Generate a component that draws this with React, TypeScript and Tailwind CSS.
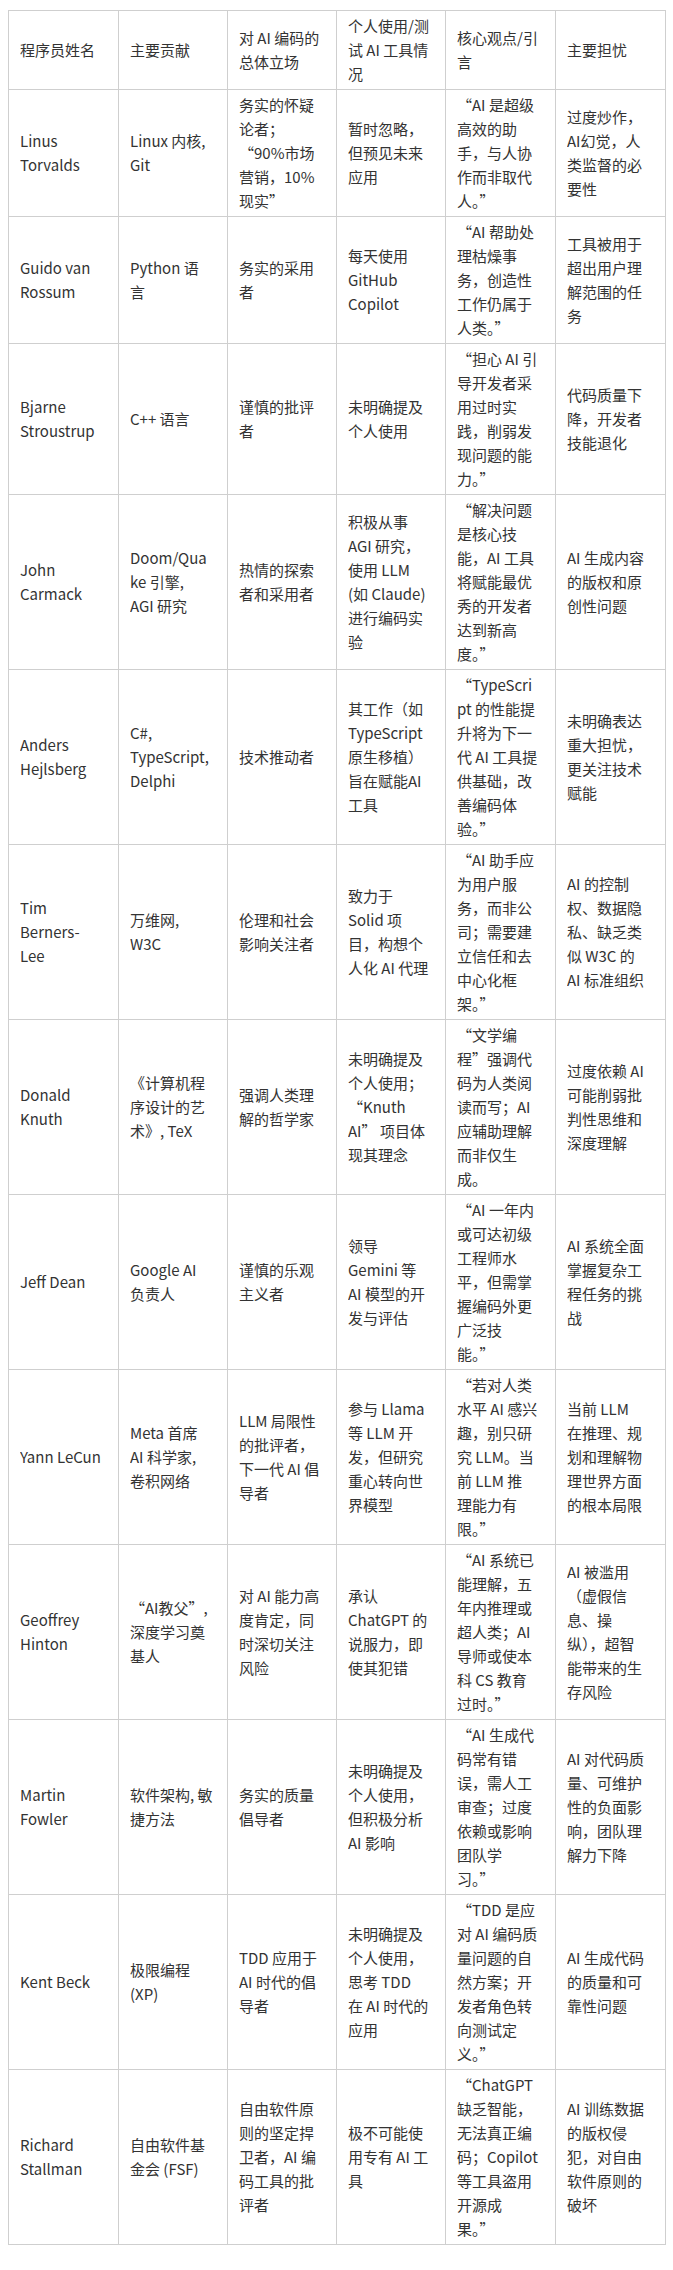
import React from "react";

type Row = string[][];

const header: Row = [
  ["程序员姓名"],
  ["主要贡献"],
  ["对 AI 编码的", "总体立场"],
  ["个人使用/测", "试 AI 工具情", "况"],
  ["核心观点/引", "言"],
  ["主要担忧"],
];

const rows: Row[] = [
  [
    ["Linus", "Torvalds"],
    ["Linux 内核,", "Git"],
    ["务实的怀疑", "论者；", "“90%市场", "营销，10%", "现实”"],
    ["暂时忽略，", "但预见未来", "应用"],
    ["“AI 是超级", "高效的助", "手，与人协", "作而非取代", "人。”"],
    ["过度炒作，", "AI幻觉，人", "类监督的必", "要性"],
  ],
  [
    ["Guido van", "Rossum"],
    ["Python 语", "言"],
    ["务实的采用", "者"],
    ["每天使用", "GitHub", "Copilot"],
    ["“AI 帮助处", "理枯燥事", "务，创造性", "工作仍属于", "人类。”"],
    ["工具被用于", "超出用户理", "解范围的任", "务"],
  ],
  [
    ["Bjarne", "Stroustrup"],
    ["C++ 语言"],
    ["谨慎的批评", "者"],
    ["未明确提及", "个人使用"],
    ["“担心 AI 引", "导开发者采", "用过时实", "践，削弱发", "现问题的能", "力。”"],
    ["代码质量下", "降，开发者", "技能退化"],
  ],
  [
    ["John", "Carmack"],
    ["Doom/Qua", "ke 引擎,", "AGI 研究"],
    ["热情的探索", "者和采用者"],
    ["积极从事", "AGI 研究，", "使用 LLM", "(如 Claude)", "进行编码实", "验"],
    ["“解决问题", "是核心技", "能，AI 工具", "将赋能最优", "秀的开发者", "达到新高", "度。”"],
    ["AI 生成内容", "的版权和原", "创性问题"],
  ],
  [
    ["Anders", "Hejlsberg"],
    ["C#,", "TypeScript,", "Delphi"],
    ["技术推动者"],
    ["其工作（如", "TypeScript", "原生移植）", "旨在赋能AI", "工具"],
    ["“TypeScri", "pt 的性能提", "升将为下一", "代 AI 工具提", "供基础，改", "善编码体", "验。”"],
    ["未明确表达", "重大担忧，", "更关注技术", "赋能"],
  ],
  [
    ["Tim", "Berners-", "Lee"],
    ["万维网,", "W3C"],
    ["伦理和社会", "影响关注者"],
    ["致力于", "Solid 项", "目，构想个", "人化 AI 代理"],
    ["“AI 助手应", "为用户服", "务，而非公", "司；需要建", "立信任和去", "中心化框", "架。”"],
    ["AI 的控制", "权、数据隐", "私、缺乏类", "似 W3C 的", "AI 标准组织"],
  ],
  [
    ["Donald", "Knuth"],
    ["《计算机程", "序设计的艺", "术》, TeX"],
    ["强调人类理", "解的哲学家"],
    ["未明确提及", "个人使用；", "“Knuth", "AI” 项目体", "现其理念"],
    ["“文学编", "程”强调代", "码为人类阅", "读而写；AI", "应辅助理解", "而非仅生", "成。"],
    ["过度依赖 AI", "可能削弱批", "判性思维和", "深度理解"],
  ],
  [
    ["Jeff Dean"],
    ["Google AI", "负责人"],
    ["谨慎的乐观", "主义者"],
    ["领导", "Gemini 等", "AI 模型的开", "发与评估"],
    ["“AI 一年内", "或可达初级", "工程师水", "平，但需掌", "握编码外更", "广泛技", "能。”"],
    ["AI 系统全面", "掌握复杂工", "程任务的挑", "战"],
  ],
  [
    ["Yann LeCun"],
    ["Meta 首席", "AI 科学家,", "卷积网络"],
    ["LLM 局限性", "的批评者，", "下一代 AI 倡", "导者"],
    ["参与 Llama", "等 LLM 开", "发，但研究", "重心转向世", "界模型"],
    ["“若对人类", "水平 AI 感兴", "趣，别只研", "究 LLM。当", "前 LLM 推", "理能力有", "限。”"],
    ["当前 LLM", "在推理、规", "划和理解物", "理世界方面", "的根本局限"],
  ],
  [
    ["Geoffrey", "Hinton"],
    ["“AI教父”,", "深度学习奠", "基人"],
    ["对 AI 能力高", "度肯定，同", "时深切关注", "风险"],
    ["承认", "ChatGPT 的", "说服力，即", "使其犯错"],
    ["“AI 系统已", "能理解，五", "年内推理或", "超人类；AI", "导师或使本", "科 CS 教育", "过时。”"],
    ["AI 被滥用", "（虚假信", "息、操", "纵），超智", "能带来的生", "存风险"],
  ],
  [
    ["Martin", "Fowler"],
    ["软件架构, 敏", "捷方法"],
    ["务实的质量", "倡导者"],
    ["未明确提及", "个人使用，", "但积极分析", "AI 影响"],
    ["“AI 生成代", "码常有错", "误，需人工", "审查；过度", "依赖或影响", "团队学", "习。”"],
    ["AI 对代码质", "量、可维护", "性的负面影", "响，团队理", "解力下降"],
  ],
  [
    ["Kent Beck"],
    ["极限编程", "(XP)"],
    ["TDD 应用于", "AI 时代的倡", "导者"],
    ["未明确提及", "个人使用，", "思考 TDD", "在 AI 时代的", "应用"],
    ["“TDD 是应", "对 AI 编码质", "量问题的自", "然方案；开", "发者角色转", "向测试定", "义。”"],
    ["AI 生成代码", "的质量和可", "靠性问题"],
  ],
  [
    ["Richard", "Stallman"],
    ["自由软件基", "金会 (FSF)"],
    ["自由软件原", "则的坚定捍", "卫者，AI 编", "码工具的批", "评者"],
    ["极不可能使", "用专有 AI 工", "具"],
    ["“ChatGPT", "缺乏智能，", "无法真正编", "码；Copilot", "等工具盗用", "开源成", "果。”"],
    ["AI 训练数据", "的版权侵", "犯，对自由", "软件原则的", "破坏"],
  ],
];

const Cell = ({ lines }: { lines: string[] }) => (
  <td className="border border-[#cfcfcf] px-[11px] py-[3px] align-middle">
    {lines.map((line, i) => (
      <div key={i} className="h-[24px] overflow-hidden whitespace-nowrap leading-[24px]">
        {line}
      </div>
    ))}
  </td>
);

export default function App() {
  return (
    <div
      className="min-h-[2270px] bg-white pt-[10px] pl-[8px] text-[15px] leading-[24px] text-[#333]"
      style={{ fontFamily: '"Noto Sans CJK SC", "Noto Sans", sans-serif' }}
    >
      <table className="w-[657px] table-fixed border-collapse">
        <colgroup>
          <col className="w-[110px]" />
          <col className="w-[109px]" />
          <col className="w-[109px]" />
          <col className="w-[109px]" />
          <col className="w-[110px]" />
          <col className="w-[110px]" />
        </colgroup>
        <thead>
          <tr>
            {header.map((lines, i) => (
              <Cell key={i} lines={lines} />
            ))}
          </tr>
        </thead>
        <tbody>
          {rows.map((row, r) => (
            <tr key={r}>
              {row.map((lines, c) => (
                <Cell key={c} lines={lines} />
              ))}
            </tr>
          ))}
        </tbody>
      </table>
    </div>
  );
}
